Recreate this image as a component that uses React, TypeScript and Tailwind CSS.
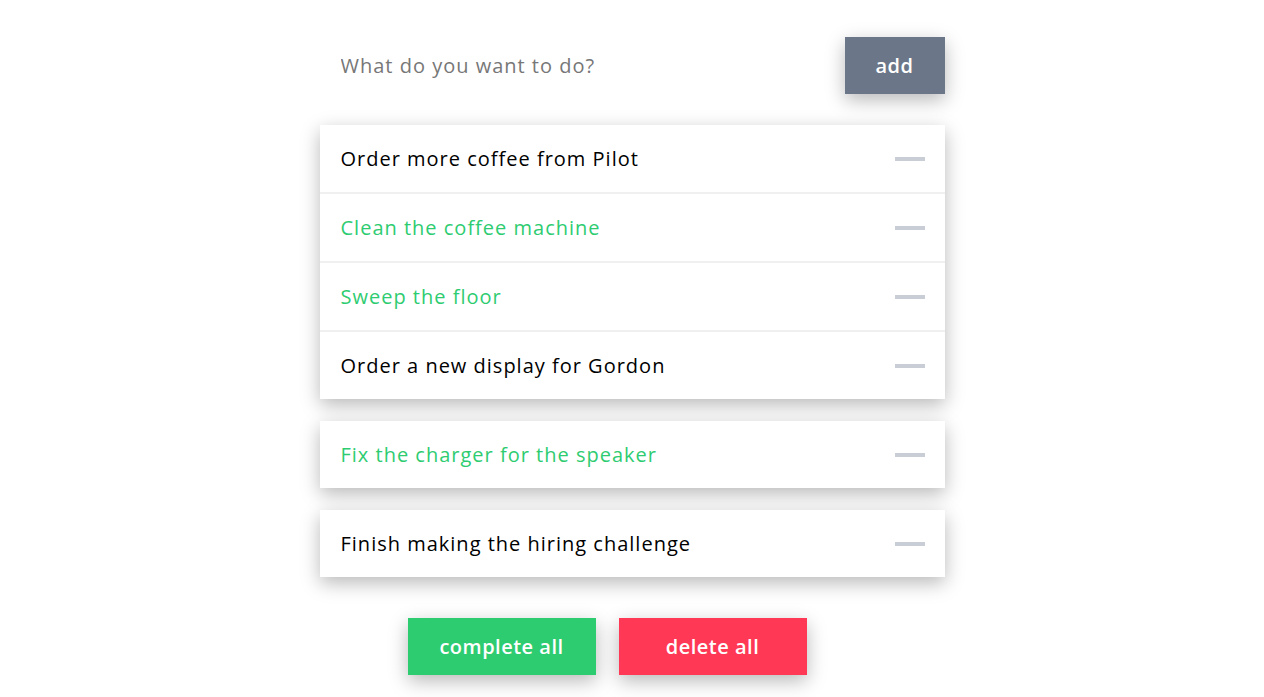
import React, { useState } from 'react';

type Todo = { id: number; text: string; done: boolean };

const GROUPS: Todo[][] = [
  [
    { id: 1, text: 'Order more coffee from Pilot', done: false },
    { id: 2, text: 'Clean the coffee machine', done: true },
    { id: 3, text: 'Sweep the floor', done: true },
    { id: 4, text: 'Order a new display for Gordon', done: false },
  ],
  [{ id: 5, text: 'Fix the charger for the speaker', done: true }],
  [{ id: 6, text: 'Finish making the hiring challenge', done: false }],
];

const Row: React.FC<{ todo: Todo; last: boolean }> = ({ todo, last }) => (
  <div
    className={`box-content flex items-center justify-between h-[67px] pl-[21px] pr-[20px] ${
      last ? '' : 'border-b-2 border-[#f0f0f0]'
    }`}
  >
    <span
      className={`text-[20px] tracking-[1px] ${todo.done ? 'text-[#2ecc71]' : 'text-black'}`}
    >
      {todo.text}
    </span>
    <span className="block w-[30px] h-[4px] bg-[#c9ced6]" />
  </div>
);

const App: React.FC = () => {
  const [value, setValue] = useState('');

  return (
    <main className="min-h-screen bg-white font-['Open_Sans',sans-serif]">
      <div className="w-[625px] mx-auto pt-[37px]">
        <div className="flex items-center justify-between">
          <input
            value={value}
            onChange={e => setValue(e.target.value)}
            placeholder="What do you want to do?"
            className="flex-1 pl-[21px] text-[20px] tracking-[1px] outline-none placeholder:text-[#777]"
          />
          <button className="w-[100px] h-[57px] bg-[#6b7788] text-white text-[20px] font-semibold tracking-[0.5px] shadow-[0_6px_18px_rgba(0,0,0,0.28)]">
            add
          </button>
        </div>

        <div className="mt-[31px] flex flex-col gap-[22px]">
          {GROUPS.map((group, gi) => (
            <div key={gi} className="bg-white shadow-[0_6px_18px_rgba(0,0,0,0.28)]">
              {group.map((todo, i) => (
                <Row key={todo.id} todo={todo} last={i === group.length - 1} />
              ))}
            </div>
          ))}
        </div>

        <div className="mt-[41px] pr-[50px] flex justify-center gap-[23px]">
          <button className="w-[188px] h-[57px] bg-[#2ecc71] text-white text-[20px] font-semibold tracking-[0.5px] shadow-[0_6px_18px_rgba(0,0,0,0.28)]">
            complete all
          </button>
          <button className="w-[188px] h-[57px] bg-[#ff3855] text-white text-[20px] font-semibold tracking-[0.5px] shadow-[0_6px_18px_rgba(0,0,0,0.28)]">
            delete all
          </button>
        </div>
      </div>
    </main>
  );
};

export default App;
